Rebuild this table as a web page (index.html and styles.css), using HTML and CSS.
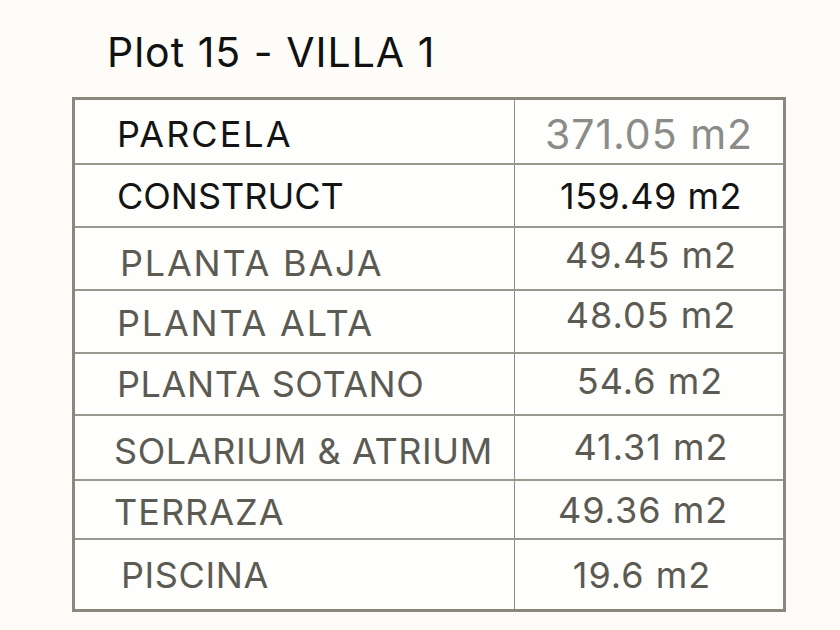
FILE: index.html
```html
<!DOCTYPE html>
<html>
<head>
<meta charset="utf-8">
<link rel="stylesheet" href="styles.css">
</head>
<body>
<div class="page">
  <h1 class="title">Plot 15 - VILLA 1</h1>
  <div class="table">
    <div class="row r1"><div class="label dark">PARCELA</div><div class="value light">371.05 m2</div></div>
    <div class="row r2"><div class="label dark">CONSTRUCT</div><div class="value dark">159.49 m2</div></div>
    <div class="row r3"><div class="label">PLANTA BAJA</div><div class="value">49.45 m2</div></div>
    <div class="row r4"><div class="label">PLANTA ALTA</div><div class="value">48.05 m2</div></div>
    <div class="row r5"><div class="label">PLANTA SOTANO</div><div class="value">54.6 m2</div></div>
    <div class="row r6"><div class="label">SOLARIUM &amp; ATRIUM</div><div class="value">41.31 m2</div></div>
    <div class="row r7"><div class="label">TERRAZA</div><div class="value">49.36 m2</div></div>
    <div class="row r8"><div class="label">PISCINA</div><div class="value">19.6 m2</div></div>
  </div>
</div>
</body>
</html>
```

FILE: styles.css
```css
html, body {
  margin: 0;
  padding: 0;
  background: #fdfcf8;
}
body {
  font-family: Inter, "Liberation Sans", sans-serif;
  width: 840px;
  height: 630px;
  overflow: hidden;
}
.page {
  padding: 26px 0 0 72px;
}
.title {
  margin: 0 0 0 35px;
  font-size: 41px;
  font-weight: 400;
  letter-spacing: 1px;
  line-height: 52px;
  color: #111;
  height: 71px;
}
.table {
  width: 708px;
  border: 3px solid #8a877c;
  background: #fefefc;
}
.row {
  display: grid;
  grid-template-columns: 440px 1fr;
  border-bottom: 2px solid #9a978d;
  height: 61px;
}
.row:last-child {
  border-bottom: none;
  height: 69px;
}
.r1 { height: 63px; }
.r5 { height: 60px; }
.r6 { height: 63px; }
.r7 { height: 57px; }
.label {
  border-right: 1px solid #8f8c82;
  display: flex;
  align-items: center;
  padding-left: 42px;
  font-size: 36px;
  letter-spacing: 0.6px;
  color: #5c5b53;
}
.value {
  display: flex;
  align-items: center;
  justify-content: center;
  font-size: 36px;
  letter-spacing: 1px;
  color: #5c5b53;
}
.dark { color: #141414; }
.value.dark { letter-spacing: 0.5px; padding-left: 4px; }
.light { color: #8b8b89; font-size: 41px; letter-spacing: 1px; padding-top: 4px; }

.r1 .label { padding-top: 5px; letter-spacing: 2px; }
.r2 .label { letter-spacing: 0; }
.r3 .label { padding-top: 8px; padding-left: 45px; letter-spacing: 1.8px; }
.r3 .value { padding-bottom: 8px; padding-left: 4px; }
.r4 .label { padding-top: 2px; letter-spacing: 1.8px; }
.r4 .value { padding-bottom: 13px; padding-left: 4px; }
.r5 .value { padding-bottom: 7px; padding-left: 2px; }
.r6 .label { padding-top: 6px; padding-left: 39px; }
.r6 .value { padding-bottom: 2px; padding-left: 4px; }
.r7 .label { padding-top: 4px; padding-left: 39px; letter-spacing: 1px; }
.r7 .value { padding-top: 1px; padding-right: 12px; }
.r8 .label { padding-left: 46px; }
.r8 .value { padding-right: 14px; }
```
